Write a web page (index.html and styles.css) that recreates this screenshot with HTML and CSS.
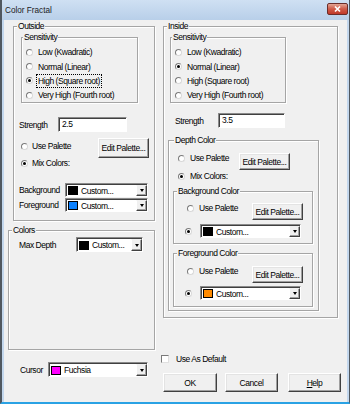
FILE: index.html
```html
<!DOCTYPE html>
<html>
<head lang="en">
    <meta charset="UTF-8">
    <title>Color Fractal</title>
    <link rel="stylesheet" href="styles.css">
</head>
<body>
<div class="window">
    <div class="titlebar">
        <span class="title">Color Fractal</span>
        <span class="close">
            <svg width="21" height="12" viewBox="0 0 21 12"><path d="M8 3.5 L13 8.5 M13 3.5 L8 8.5" stroke="#fff" stroke-width="1.7"/></svg>
        </span>
    </div>
    <div class="client">
        <div class="left">
            <div class="group outside">
                <span class="glabel">Outside</span>
                <div class="group sens">
                    <span class="glabel">Sensitivity</span>
                    <div class="rrow"><i class="radio"></i><span>Low (Kwadratic)</span></div>
                    <div class="rrow"><i class="radio"></i><span>Normal (Linear)</span></div>
                    <div class="rrow"><i class="radio on"></i><span class="focus">High (Square root)</span></div>
                    <div class="rrow"><i class="radio"></i><span>Very High (Fourth root)</span></div>
                </div>
                <div class="row o-strength"><span class="lbl" style="width:39px">Strength</span><span class="edit" style="width:69px">2.5</span></div>
                <div class="row o-use">
                    <span class="ritem" style="width:77px"><i class="radio"></i>Use Palette</span>
                    <span class="btn big">Edit Palette...</span>
                </div>
                <div class="row o-mix"><span class="ritem"><i class="radio on"></i>Mix Colors:</span></div>
                <div class="row o-bg">
                    <span class="lbl" style="width:46px">Background</span>
                    <span class="combo" style="width:83px"><i class="swatch black"></i><span class="txt">Custom...</span><i class="drop"></i></span>
                </div>
                <div class="row o-fg">
                    <span class="lbl" style="width:46px">Foreground</span>
                    <span class="combo" style="width:83px"><i class="swatch blue"></i><span class="txt">Custom...</span><i class="drop"></i></span>
                </div>
            </div>
            <div class="group colors">
                <span class="glabel">Colors</span>
                <div class="row c-max">
                    <span class="lbl" style="width:57px">Max Depth</span>
                    <span class="combo tall" style="width:67px"><i class="swatch black"></i><span class="txt">Custom...</span><i class="drop"></i></span>
                </div>
            </div>
            <div class="row cursor">
                <span class="lbl" style="width:28px">Cursor</span>
                <span class="combo tall" style="width:100px"><i class="swatch fuchsia"></i><span class="txt">Fuchsia</span><i class="drop"></i></span>
            </div>
        </div>
        <div class="right">
            <div class="group inside">
                <span class="glabel">Inside</span>
                <div class="group sens">
                    <span class="glabel">Sensitivity</span>
                    <div class="rrow"><i class="radio"></i><span>Low (Kwadratic)</span></div>
                    <div class="rrow"><i class="radio on"></i><span>Normal (Linear)</span></div>
                    <div class="rrow"><i class="radio"></i><span>High (Square root)</span></div>
                    <div class="rrow"><i class="radio"></i><span>Very High (Fourth root)</span></div>
                </div>
                <div class="row i-strength"><span class="lbl" style="width:43px">Strength</span><span class="edit" style="width:67px">3.5</span></div>
                <div class="group depth">
                    <span class="glabel">Depth Color</span>
                    <div class="row d-use">
                        <span class="ritem" style="width:61px"><i class="radio"></i>Use Palette</span>
                        <span class="btn small">Edit Palette...</span>
                    </div>
                    <div class="row d-mix"><span class="ritem"><i class="radio on"></i>Mix Colors:</span></div>
                    <div class="group sub">
                        <span class="glabel">Background Color</span>
                        <div class="row s-use">
                            <span class="ritem" style="width:65px"><i class="radio"></i>Use Palette</span>
                            <span class="btn small">Edit Palette...</span>
                        </div>
                        <div class="row s-combo">
                            <i class="radio on"></i>
                            <span class="combo" style="width:101px"><i class="swatch black"></i><span class="txt">Custom...</span><i class="drop"></i></span>
                        </div>
                    </div>
                    <div class="group sub fgc">
                        <span class="glabel">Foreground Color</span>
                        <div class="row s-use">
                            <span class="ritem" style="width:65px"><i class="radio"></i>Use Palette</span>
                            <span class="btn small">Edit Palette...</span>
                        </div>
                        <div class="row s-combo">
                            <i class="radio on"></i>
                            <span class="combo" style="width:101px"><i class="swatch orange"></i><span class="txt">Custom...</span><i class="drop"></i></span>
                        </div>
                    </div>
                </div>
            </div>
            <div class="row def"><i class="check"></i><span>Use As Default</span></div>
            <div class="buttons">
                <span class="btn ok">OK</span>
                <span class="btn cancel">Cancel</span>
                <span class="btn help"><u>H</u>elp</span>
            </div>
        </div>
    </div>
</div>
</body>
</html>
```

FILE: styles.css
```css
*{
    margin: 0;
    padding: 0;
    box-sizing: border-box;
}
body{
    width: 350px;
    height: 404px;
    overflow: hidden;
    font-family: "Liberation Sans", Arial, sans-serif;
    font-size: 8.5px;
    letter-spacing: -0.45px;
    color: #000;
}
i{
    display: block;
    font-style: normal;
}
.window{
    height: 404px;
    display: flex;
    flex-direction: column;
    background: #c3d7ed;
    border-left: 2px solid #505860;
    border-right: 1px solid #505860;
    border-bottom: 2px solid #2aa2e4;
}
.titlebar{
    height: 20px;
    flex: none;
    display: flex;
    align-items: center;
    padding-left: 3px;
    background: linear-gradient(#cfe0f3, #b8cfe9);
    font-size: 8.2px;
    letter-spacing: 0;
    color: #1b1b1b;
}
.close{
    margin-left: auto;
    margin-right: 1px;
    align-self: flex-start;
    margin-top: 3px;
    width: 21px;
    height: 12px;
    border: 1px solid #6b2d2a;
    border-radius: 2px;
    background: linear-gradient(#e3a595, #cf5a48 50%, #c03a2a);
}
.close svg{
    display: block;
    margin: -1px 0 0 -1px;
}
.client{
    flex: 1;
    margin: 0 2px;
    background: #f0f0f0;
    display: flex;
    gap: 8px;
    padding: 6px 0 0 4px;
}
.left{
    width: 147px;
    display: flex;
    flex-direction: column;
}
.right{
    display: flex;
    flex-direction: column;
}
.group{
    position: relative;
    border: 1px solid #a5a5a5;
    box-shadow: inset 1px 1px 0 #fff, 1px 1px 0 #fff;
    flex: none;
}
.glabel{
    position: absolute;
    top: -6px;
    left: 3px;
    padding: 0 1px;
    line-height: 10px;
    background: #f0f0f0;
    white-space: nowrap;
}
.sens .glabel{
    left: 1px;
}
.depth > .glabel{
    left: 5px;
}
.row{
    display: flex;
    align-items: center;
    flex: none;
}
.rrow{
    display: flex;
    align-items: center;
    height: 14.4px;
}
.ritem{
    display: flex;
    align-items: center;
}
.radio{
    width: 7px;
    height: 7px;
    flex: none;
    border-radius: 50%;
    background: #fff;
    border: 1px solid;
    border-color: #7a7a7a #d8d8d8 #d8d8d8 #7a7a7a;
    position: relative;
    margin-right: 5px;
}
.radio.on::after{
    content: "";
    position: absolute;
    left: 1px;
    top: 1px;
    width: 3px;
    height: 3px;
    border-radius: 50%;
    background: #000;
}
.focus{
    outline: 1px dotted #000;
    padding: 1px 1px;
    margin-left: -1px;
}
.lbl{
    flex: none;
}
.edit{
    height: 15px;
    background: #fff;
    border: 1px solid;
    border-color: #8a8a8a #fff #fff #8a8a8a;
    box-shadow: inset 1px 1px 0 #404040;
    padding-left: 3px;
    line-height: 13px;
}
.combo{
    height: 14px;
    display: flex;
    align-items: center;
    background: #fff;
    border: 1px solid;
    border-color: #8a8a8a #fff #fff #8a8a8a;
    box-shadow: inset 1px 1px 0 #404040;
    padding: 1px 0 0 2px;
    flex: none;
}
.combo.tall{
    height: 15px;
}
.combo .txt{
    flex: 1;
    white-space: nowrap;
}
.swatch{
    width: 10px;
    height: 9px;
    border: 1px solid #000;
    margin-right: 3px;
    flex: none;
}
.black{ background: #000; }
.blue{ background: #0a80ff; }
.orange{ background: #ff8a00; }
.fuchsia{ background: #ff00ff; }
.drop{
    width: 11px;
    align-self: stretch;
    flex: none;
    background: #f0f0f0;
    border: 1px solid;
    border-color: #f0f0f0 #404040 #404040 #fff;
    box-shadow: inset -1px -1px 0 #a0a0a0;
    display: flex;
    align-items: center;
    justify-content: center;
}
.drop::after{
    content: "";
    border-left: 2.5px solid transparent;
    border-right: 2.5px solid transparent;
    border-top: 3px solid #000;
}
.btn{
    display: flex;
    align-items: center;
    justify-content: center;
    flex: none;
    background: #f0f0f0;
    border: 1px solid;
    border-color: #fff #404040 #404040 #fff;
    box-shadow: inset -1px -1px 0 #a0a0a0, inset 1px 1px 0 #e3e3e3;
    white-space: nowrap;
}
.btn.big{
    width: 51px;
    height: 20px;
    align-self: flex-start;
    margin-top: -1px;
}
.btn.small{
    width: 51px;
    height: 17px;
    align-self: flex-start;
    margin-top: 2px;
}
.check{
    width: 8px;
    height: 8px;
    flex: none;
    background: #fff;
    border: 1px solid;
    border-color: #7a7a7a #e0e0e0 #e0e0e0 #7a7a7a;
    margin-right: 7px;
}

/* outside */
.outside{
    margin-left: 5px;
    width: 142px;
    height: 195px;
}
.sens{
    margin: 10px 0 0 7px;
    width: 117px;
    height: 66px;
    padding: 7px 0 0 4px;
}
.o-strength{
    margin-top: 14px;
    height: 15px;
    padding-left: 5px;
}
.o-use{
    margin-top: 7px;
    height: 14px;
    padding-left: 7px;
}
.o-use .radio, .o-mix .radio{
    margin-right: 4px;
}
.o-mix{
    margin-top: 3px;
    height: 14px;
    padding-left: 7px;
}
.o-bg{
    margin-top: 13px;
    height: 14px;
    padding-left: 5px;
}
.o-fg{
    margin-top: 1px;
    height: 14px;
    padding-left: 5px;
}

/* colors */
.colors{
    margin-top: 9px;
    width: 147px;
    height: 120px;
}
.c-max{
    margin-top: 6px;
    height: 15px;
    padding-left: 10px;
}
.cursor{
    margin-top: 12px;
    height: 15px;
    padding-left: 12px;
}

/* inside */
.inside{
    width: 175px;
    height: 292px;
}
.inside .sens{
    margin-left: 6px;
    width: 116px;
}
.i-strength{
    margin-top: 10px;
    height: 15px;
    padding-left: 11px;
}
.depth{
    margin: 12px 0 0 4px;
    width: 151px;
    height: 171px;
}
.d-use{
    margin-top: 10px;
    height: 14px;
    padding-left: 9px;
}
.d-mix{
    margin-top: 4px;
    height: 14px;
    padding-left: 9px;
}
.sub{
    margin: 8px 0 0 4px;
    width: 140px;
    height: 53px;
}
.sub.fgc{
    margin-top: 9px;
    height: 54px;
}
.s-use{
    margin-top: 9px;
    height: 14px;
    padding-left: 13px;
}
.fgc .s-use{
    margin-top: 10px;
}
.s-combo{
    margin-top: 9px;
    height: 14px;
    padding-left: 11px;
}
.s-combo .radio{
    margin-right: 8px;
}
.fgc .s-combo{
    margin-top: 8px;
}

/* bottom */
.def{
    margin: 37px 0 0 -2px;
    height: 8px;
}
.buttons{
    margin-top: 10px;
    display: flex;
}
.buttons .btn{
    height: 19px;
    width: 53px;
}
.ok{
    width: 54px !important;
    margin-right: 8px;
}
.cancel{
    margin-right: 10px;
}
```
